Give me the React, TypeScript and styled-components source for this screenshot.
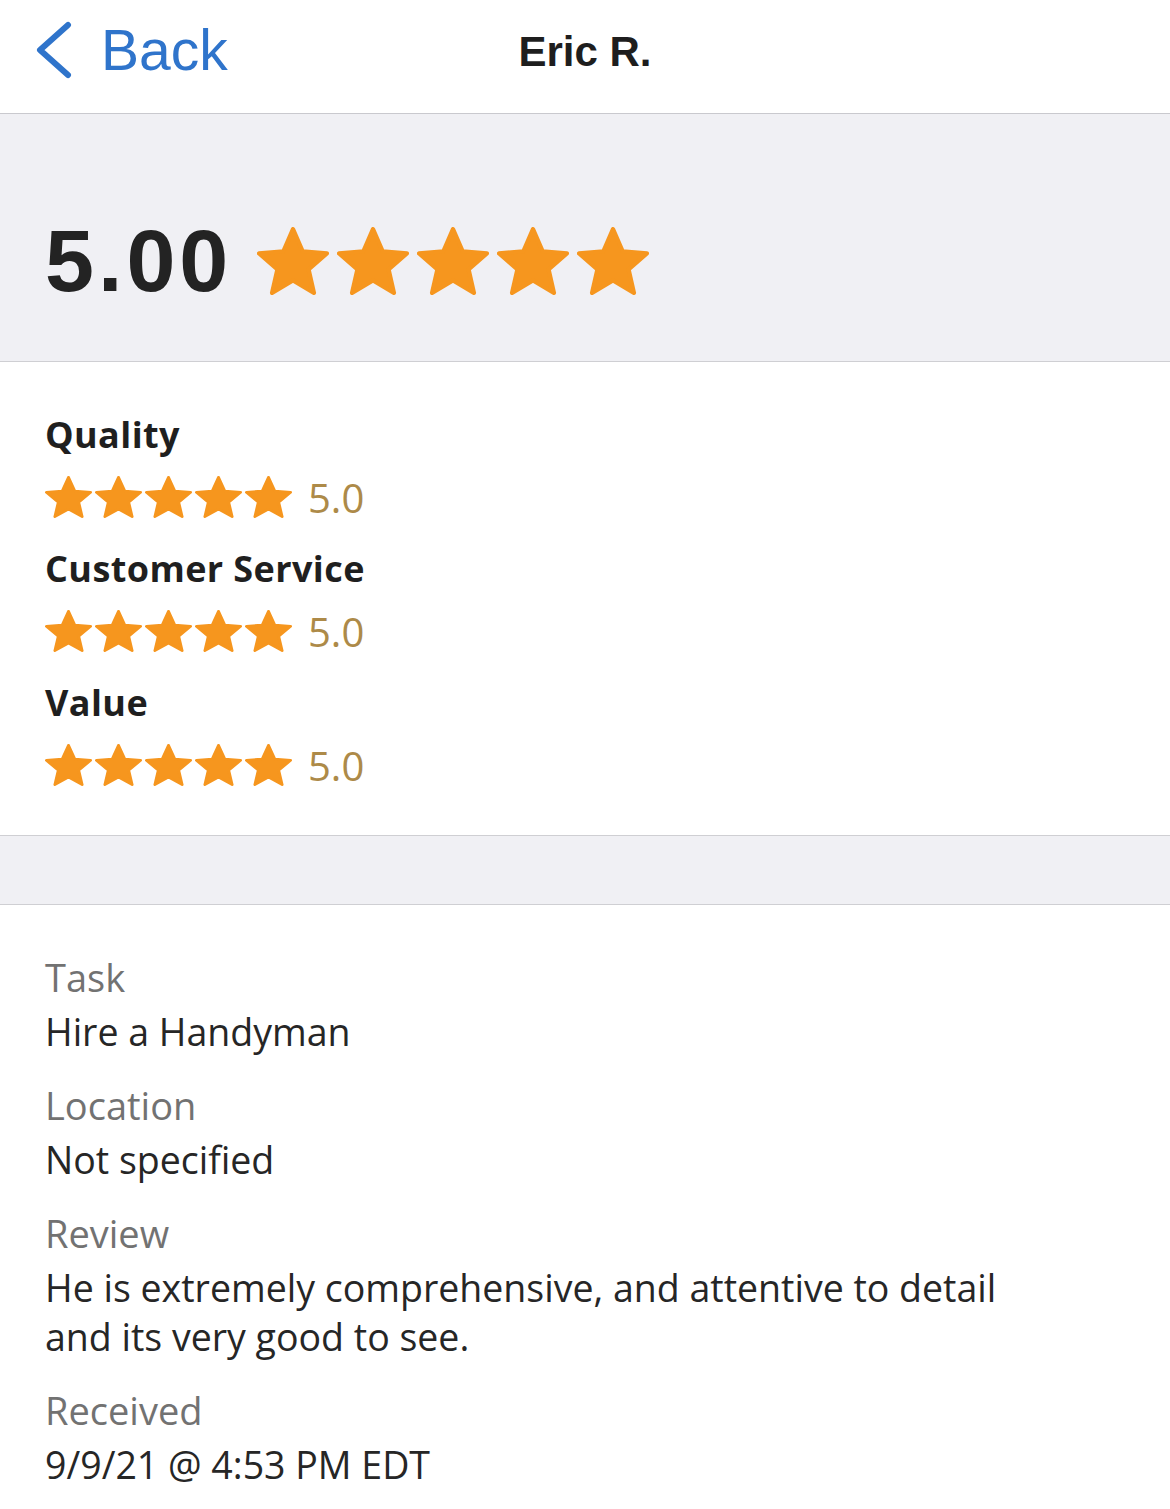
import React from "react";
import styled, { createGlobalStyle } from "styled-components";

const GlobalStyle = createGlobalStyle`
  html, body {
    margin: 0;
    padding: 0;
    background: #ffffff;
  }
  body {
    font-family: "Open Sans", "Liberation Sans", Arial, sans-serif;
    color: #262626;
  }
`;

interface CategoryScore {
  name: string;
  score: string;
}

interface Detail {
  label: string;
  value: string;
}

const categories: CategoryScore[] = [
  { name: "Quality", score: "5.0" },
  { name: "Customer Service", score: "5.0" },
  { name: "Value", score: "5.0" },
];

const details: Detail[] = [
  { label: "Task", value: "Hire a Handyman" },
  { label: "Location", value: "Not specified" },
  {
    label: "Review",
    value:
      "He is extremely comprehensive, and attentive to detail and its very good to see.",
  },
  { label: "Received", value: "9/9/21 @ 4:53 PM EDT" },
];

// chunky five point star, inner radius a bit larger than the classic one
const STAR_POINTS =
  "12,2.5 14.704,8.779 21.511,9.41 16.375,13.921 17.878,20.59 12,17.1 6.122,20.59 7.625,13.921 2.489,9.41 9.296,8.779";

function Star({ w, h }: { w: number; h: number }) {
  return (
    <svg
      width={w}
      height={h}
      viewBox="1.9 1.9 20.2 19.3"
      preserveAspectRatio="none"
      aria-hidden="true"
    >
      <polygon
        points={STAR_POINTS}
        fill="#f6961e"
        stroke="#f6961e"
        strokeWidth="1.2"
        strokeLinejoin="round"
      />
    </svg>
  );
}

function Stars({ w, h }: { w: number; h: number }) {
  return (
    <>
      {[0, 1, 2, 3, 4].map((i) => (
        <Star key={i} w={w} h={h} />
      ))}
    </>
  );
}

export default function App() {
  return (
    <Page>
      <GlobalStyle />
      <NavBar>
        <BackButton>
          <svg width="40" height="58" viewBox="0 0 40 58" aria-hidden="true">
            <polyline
              points="35,4 7,29 35,54"
              fill="none"
              stroke="#2f74cb"
              strokeWidth="6"
              strokeLinecap="round"
              strokeLinejoin="round"
            />
          </svg>
          <span>Back</span>
        </BackButton>
        <NavTitle>Eric R.</NavTitle>
        <div />
      </NavBar>

      <ScoreBand>
        <BigScore>5.00</BigScore>
        <StarRow $gap={8}>
          <Stars w={72} h={68} />
        </StarRow>
      </ScoreBand>

      <Categories>
        {categories.map((c) => (
          <CategoryGroup key={c.name}>
            <CategoryName>{c.name}</CategoryName>
            <CategoryStars>
              <StarRow $gap={3}>
                <Stars w={47} h={42} />
              </StarRow>
              <ScoreText>{c.score}</ScoreText>
            </CategoryStars>
          </CategoryGroup>
        ))}
      </Categories>

      <Spacer />

      <Details>
        {details.map((d) => (
          <DetailItem key={d.label}>
            <DetailLabel>{d.label}</DetailLabel>
            <DetailValue>{d.value}</DetailValue>
          </DetailItem>
        ))}
      </Details>
    </Page>
  );
}

const Page = styled.div`
  width: 1170px;
  min-height: 1509px;
  background: #ffffff;
`;

const NavBar = styled.header`
  height: 113px;
  display: grid;
  grid-template-columns: 1fr auto 1fr;
  align-items: center;
  border-bottom: 1px solid #c9c9ce;
  background: #ffffff;
`;

const BackButton = styled.div`
  display: flex;
  align-items: center;
  gap: 28px;
  padding-left: 33px;
  margin-top: -14px;
  color: #2f74cb;
  font-family: "Liberation Sans", Arial, sans-serif;
  font-size: 57px;
  cursor: pointer;
`;

const NavTitle = styled.div`
  font-family: "Liberation Sans", Arial, sans-serif;
  font-weight: 700;
  font-size: 42px;
  color: #1e1e1e;
  margin-top: -10px;
`;

const ScoreBand = styled.section`
  height: 248px;
  display: flex;
  align-items: center;
  gap: 25px;
  padding: 46px 45px 0;
  background: #f0f0f4;
  border-bottom: 1px solid #cfcfd3;
  box-sizing: border-box;
`;

const BigScore = styled.div`
  font-family: "Liberation Sans", Arial, sans-serif;
  font-weight: 700;
  font-size: 88px;
  letter-spacing: 4px;
  color: #232323;
  line-height: 1;
`;

const StarRow = styled.div<{ $gap: number }>`
  display: flex;
  align-items: center;
  gap: ${(p) => p.$gap}px;
`;

const Categories = styled.section`
  padding: 42px 45px 29px;
  border-bottom: 1px solid #cfcfd3;
`;

const CategoryGroup = styled.div`
  margin-bottom: 10px;
`;

const CategoryName = styled.div`
  height: 62px;
  line-height: 62px;
  font-weight: 700;
  font-size: 36px;
  letter-spacing: 0.4px;
  color: #1f1f1f;
`;

const CategoryStars = styled.div`
  height: 62px;
  display: flex;
  align-items: center;
  gap: 16px;
`;

const ScoreText = styled.span`
  font-size: 40px;
  color: #ad8a48;
`;

const Spacer = styled.div`
  height: 68px;
  background: #f0f0f4;
  border-bottom: 1px solid #cfcfd3;
`;

const Details = styled.section`
  padding: 47px 45px 20px;
  display: flex;
  flex-direction: column;
  gap: 24px;
`;

const DetailItem = styled.div`
  display: flex;
  flex-direction: column;
  gap: 5px;
`;

const DetailLabel = styled.div`
  line-height: 50px;
  font-size: 38px;
  font-weight: 500;
  color: #727272;
`;

const DetailValue = styled.div`
  max-width: 975px;
  line-height: 49px;
  font-size: 37.5px;
  color: #262626;
`;
